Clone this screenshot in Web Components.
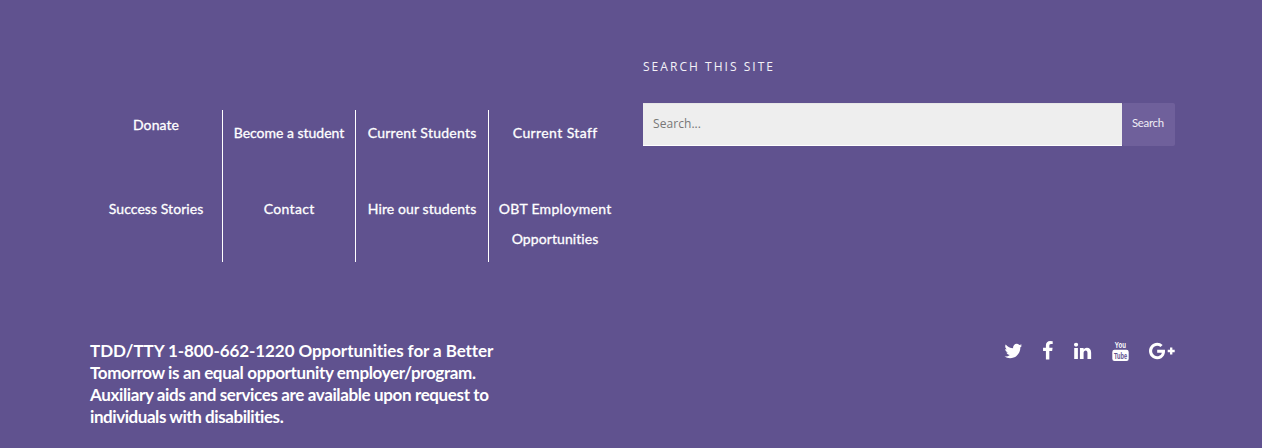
<!DOCTYPE html>
<html lang="en">
<head>
<meta charset="utf-8">
<title>Site footer</title>
<style>
html,body{margin:0;height:100%;background:#60528f;overflow:hidden}
body{font-family:Lato,"Liberation Sans",sans-serif;color:#fff}
</style>
</head>
<body>
<site-footer></site-footer>
<script>
const define = (name, html, setup) => customElements.define(name, class extends HTMLElement {
  connectedCallback() {
    if (this.shadowRoot) return;
    this.attachShadow({mode: 'open'}).innerHTML = html;
    if (setup) setup(this, this.shadowRoot);
  }
});

/* One line of type, tracked out or in to a given measure. */
define('tracked-line', `<style>
:host{display:block;white-space:nowrap}
span{display:inline-block}
</style><span><slot></slot></span>`, (host, root) => {
  const span = root.querySelector('span');
  const want = parseFloat(host.getAttribute('measure'));
  const n = host.textContent.trim().length;
  span.style.letterSpacing = '0px';
  const ls = (want - span.getBoundingClientRect().width) / (n - 1);
  span.style.letterSpacing = ls + 'px';
  span.style.marginRight = -ls + 'px';
});

define('nav-cell', `<style>
:host{display:block;box-sizing:border-box;height:76px;padding-top:8px;text-align:center;
font-size:14px;font-weight:400;line-height:30px;-webkit-text-stroke:.3px #fff}
:host([flush]){padding-top:0}
</style><slot></slot>`);

define('nav-column', `<style>
:host{display:block;box-sizing:border-box;width:133px;height:152px;border-right:1px solid #fff}
:host(:last-child){border-right-color:transparent}
</style><slot></slot>`);

define('footer-nav', `<style>
:host{display:flex;margin-top:110px;width:553px}
</style>
<nav-column><nav-cell flush><tracked-line measure="46">Donate</tracked-line></nav-cell><nav-cell><tracked-line measure="94.5">Success Stories</tracked-line></nav-cell></nav-column>
<nav-column><nav-cell><tracked-line measure="110.5">Become a student</tracked-line></nav-cell><nav-cell><tracked-line measure="50.5">Contact</tracked-line></nav-cell></nav-column>
<nav-column><nav-cell><tracked-line measure="108.5">Current Students</tracked-line></nav-cell><nav-cell><tracked-line measure="108.5">Hire our students</tracked-line></nav-cell></nav-column>
<nav-column><nav-cell><tracked-line measure="84">Current Staff</tracked-line></nav-cell><nav-cell><tracked-line measure="112.5">OBT Employment</tracked-line><tracked-line measure="87">Opportunities</tracked-line></nav-cell></nav-column>`);

define('site-search', `<style>
:host{display:block;width:532px;padding-top:57px}
h4{margin:0 0 26px;height:20px;font:400 12px/20px "Open Sans",sans-serif;color:#f4f2f8}
form{display:flex;height:43px}
.field{box-sizing:border-box;width:479px;padding:0 10px;background:#eee;border:solid #fff;border-width:0 0 1px;border-top:1px solid #e6e6e6;
font:400 12px/40px "Open Sans",sans-serif;color:#777}
.button{box-sizing:border-box;width:53px;padding-left:10px;background:#6f609b;border-radius:2px;font-size:11.4px;line-height:40px;color:#f0edf6}
</style>
<h4><tracked-line measure="130">SEARCH THIS SITE</tracked-line></h4>
<form><div class="field"><tracked-line measure="48">Search...</tracked-line></div><div class="button"><tracked-line measure="32">Search</tracked-line></div></form>`);

define('footer-notice', `<style>
:host{display:block;font-size:17px;font-weight:700;line-height:22px}
</style>
<tracked-line measure="403">TDD/TTY 1-800-662-1220 Opportunities for a Better</tracked-line>
<tracked-line measure="386">Tomorrow is an equal opportunity employer/program.</tracked-line>
<tracked-line measure="399">Auxiliary aids and services are available upon request to</tracked-line>
<tracked-line measure="194">individuals with disabilities.</tracked-line>`);

const icons = {
  twitter: [1664, 'M1620 1128q-67 -98 -162 -167q1 -14 1 -42q0 -130 -38 -259.5t-115.5 -248.5t-184.5 -210.5t-258 -146t-323 -54.5q-271 0 -496 145q35 -4 78 -4q225 0 401 138q-105 2 -188 64.5t-114 159.5q33 -5 61 -5q43 0 85 11q-112 23 -185.5 111.5t-73.5 205.5v4q68 -38 146 -41q-66 44 -105 115t-39 154q0 88 44 163q121 -149 294.5 -238.5t371.5 -99.5q-8 38 -8 74q0 134 94.5 228.5t228.5 94.5q140 0 236 -102q109 21 205 78q-37 -115 -142 -178q93 10 186 50z'],
  facebook: [1024, 'M959 1524v-264h-157q-86 0 -116 -36t-30 -108v-189h293l-39 -296h-254v-759h-306v759h-255v296h255v218q0 186 104 288.5t277 102.5q147 0 228 -12z'],
  linkedin: [1536, 'M349 911v-991h-330v991h330zM370 1217q1 -73 -50.5 -122t-135.5 -49h-2q-82 0 -132 49t-50 122q0 74 51.5 122.5t134.5 48.5t133 -48.5t51 -122.5zM1536 488v-568h-329v530q0 105 -40.5 164.5t-126.5 59.5q-63 0 -105.5 -34.5t-63.5 -85.5q-11 -30 -11 -81v-553h-329q2 399 2 647t-1 296l-1 48h329v-144h-2q20 32 41 56t56.5 52t87 43.5t114.5 15.5q171 0 275 -113.5t104 -332.5z'],
  google: [2304, 'M1437 623q0 -208 -87 -370.5t-248 -254t-369 -91.5q-149 0 -285 58t-234 156t-156 234t-58 285t58 285t156 234t234 156t285 58q286 0 491 -192l-199 -191q-117 113 -292 113q-123 0 -227.5 -62t-165.5 -168.5t-61 -232.5t61 -232.5t165.5 -168.5t227.5 -62q83 0 152.5 23t114.5 57.5t78.5 78.5t49 83t21.5 74h-416v252h692q12 -63 12 -122zM2304 745v-210h-209v-209h-210v209h-209v210h209v209h210v-209h209z']
};

define('social-icon', `<style>:host{display:block;height:20px}:host([name=twitter]){margin-right:-.5px}svg{display:block;height:20px;overflow:visible}</style>`, (host, root) => {
  const name = host.getAttribute('name');
  const box = document.createElement('div');
  if (name === 'youtube') {
    box.innerHTML = `<svg width="17.14" viewBox="0 0 17.14 20" font-family="Liberation Sans,sans-serif" font-weight="700">
      <text transform="translate(2.8 6.9) scale(.6 1)" font-size="9.4" textLength="18.5" lengthAdjust="spacingAndGlyphs" fill="#fff">You</text>
      <rect x=".3" y="8.7" width="16.4" height="11.2" rx="2.2" fill="#fff"/>
      <text transform="translate(2 18.3) scale(.6 1)" font-size="9.4" textLength="21.8" lengthAdjust="spacingAndGlyphs" fill="#60528f">Tube</text></svg>`;
  } else {
    const [w, d] = icons[name];
    box.innerHTML = `<svg width="${w / 89.6}" viewBox="0 0 ${w} 1792"><path fill="#fff" transform="translate(0 1536) scale(1 -1)" d="${d}"/></svg>`;
  }
  root.append(box);
});

define('social-links', `<style>:host{display:flex;gap:20.4px;padding-top:1px}</style>
<social-icon name="twitter"></social-icon><social-icon name="facebook"></social-icon><social-icon name="linkedin"></social-icon><social-icon name="youtube"></social-icon><social-icon name="google"></social-icon>`);

define('site-footer', `<style>
:host{display:block;box-sizing:border-box;height:448px;padding:0 87px 0 90px}
.top{display:flex;height:340px}
.bottom{display:flex;justify-content:space-between}
</style>
<div class="top"><footer-nav></footer-nav><site-search></site-search></div>
<div class="bottom"><footer-notice></footer-notice><social-links></social-links></div>`);
</script>
</body>
</html>
